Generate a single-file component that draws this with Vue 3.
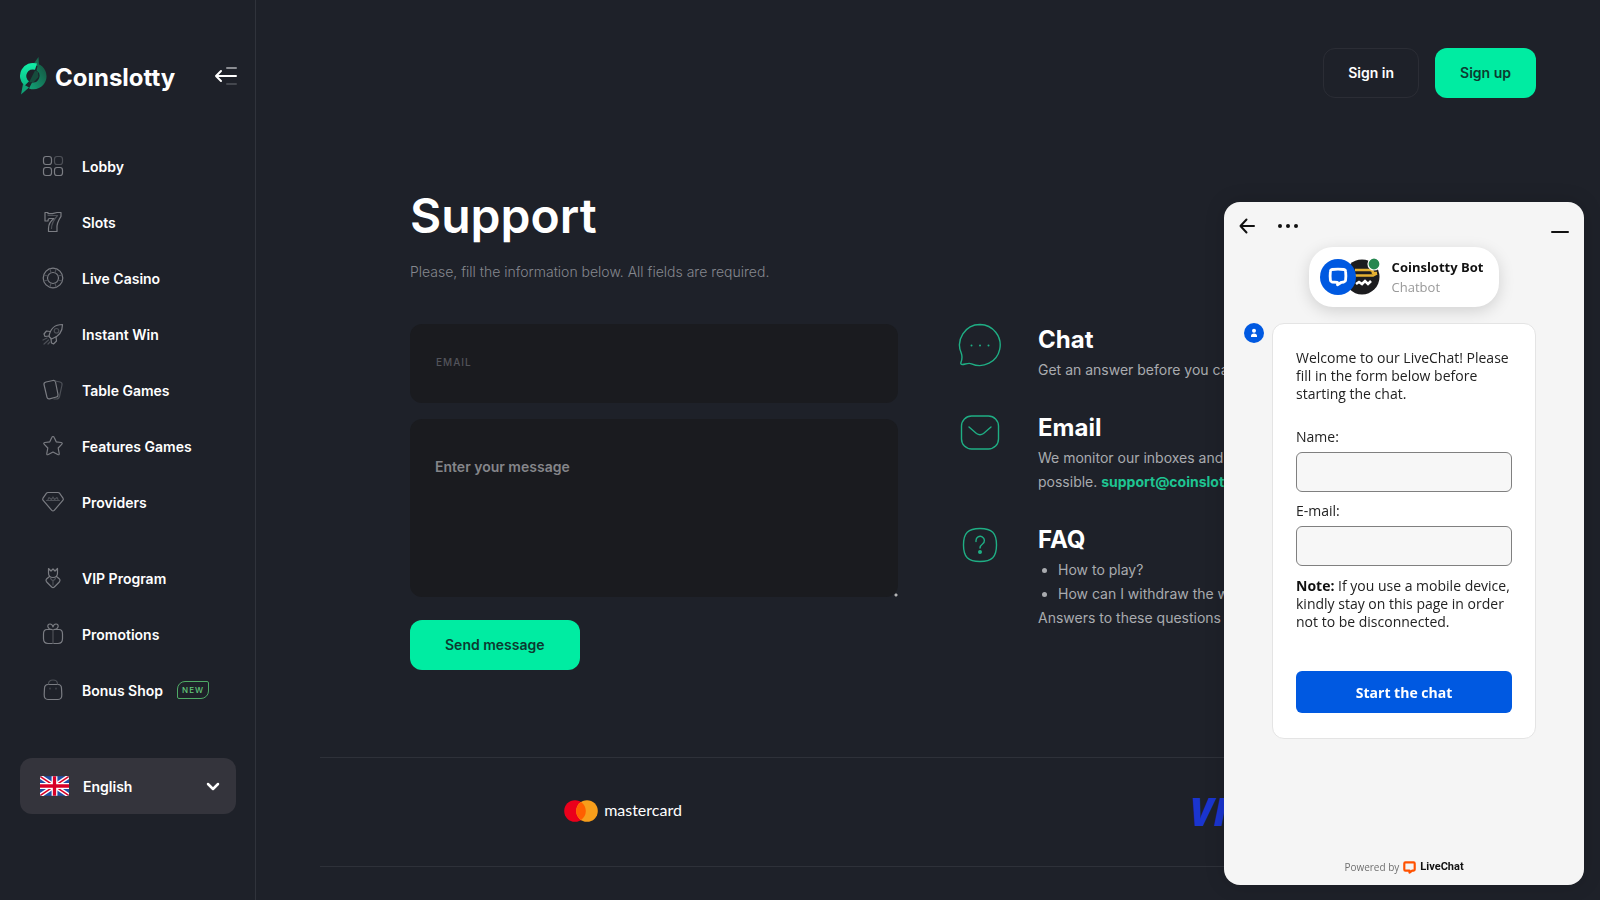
<template>
  <div class="layout">
    <aside class="sidebar">
      <div class="brand">
        <a href="#" class="logo">
          <svg class="logo-mark" viewBox="0 0 28 40" aria-hidden="true">
            <defs>
              <linearGradient id="markLight" x1="0" y1="0" x2="0" y2="1">
                <stop offset="0" stop-color="#12f0a8" />
                <stop offset="1" stop-color="#0bb985" />
              </linearGradient>
              <linearGradient id="markDark" x1="0" y1="1" x2="1" y2="0">
                <stop offset="0" stop-color="#12a377" />
                <stop offset="1" stop-color="#15523f" />
              </linearGradient>
            </defs>
            <path d="M18.500 1 19 10 12 10Z" fill="#17694f" />
            <path d="M1 38.500 3 28 9 31.500Z" fill="#11a176" />
            <path d="M18 8A13 13 0 0 1 9 32.400L12 26.400A6.500 6.500 0 0 0 16.500 14.500Z" fill="url(#markDark)" />
            <path d="M17 7.600A13 13 0 0 0 4.500 29.800L9 25.200A6.500 6.500 0 0 1 15 13.800Z" fill="url(#markLight)" />
            <path d="M15 14.500 9 26.500 14 26 18.500 21 18 16Z" fill="#164c3d" />
          </svg>
          <span class="logo-text">Coınslotty</span>
        </a>
        <button type="button" class="collapse" aria-label="Collapse menu">
          <svg viewBox="0 0 24 20" fill="none" stroke-linecap="round" stroke-width="2">
            <path d="M13 2h9" stroke="#8b8d92" />
            <path d="M13 18h9" stroke="#44474e" />
            <path d="M2 10h20M7 5l-5 5 5 5" stroke="#fff" stroke-linejoin="round" />
          </svg>
        </button>
      </div>

      <nav class="nav">
        <ul v-for="(group, index) in menu" :key="index" class="nav-group">
          <li v-for="item in group" :key="item.label">
            <a href="#" class="nav-link">
              <svg class="nav-icon" viewBox="0 0 22 22" aria-hidden="true">
                <path v-for="(d, i) in item.paths" :key="i" :d="d" />
                <path v-for="(d, i) in item.faint" :key="'f' + i" :d="d" class="faint" />
              </svg>
              <span>{{ item.label }}</span>
              <span v-if="item.badge" class="badge">{{ item.badge }}</span>
            </a>
          </li>
        </ul>
      </nav>

      <label class="language">
        <svg class="flag" viewBox="0 0 30 20" aria-hidden="true">
          <path fill="#1f4ea3" d="M0 0h30v20H0z" />
          <path d="M0 0l30 20M30 0L0 20" stroke="#fff" stroke-width="4.500" />
          <path d="M0 0l30 20M30 0L0 20" stroke="#d80027" stroke-width="1.600" />
          <path d="M15 0v20M0 10h30" stroke="#fff" stroke-width="6" />
          <path d="M15 0v20M0 10h30" stroke="#d80027" stroke-width="3.400" />
        </svg>
        <select v-model="language" aria-label="Language">
          <option>English</option>
          <option>Deutsch</option>
        </select>
        <svg class="chevron" viewBox="0 0 14 10" aria-hidden="true">
          <path d="M2 3l5 5 5-5" />
        </svg>
      </label>
    </aside>

    <main class="content">
      <header class="topbar">
        <button type="button" class="btn btn-outline">Sign in</button>
        <button type="button" class="btn btn-primary">Sign up</button>
      </header>

      <section class="support">
        <h1>Support</h1>
        <p class="lead">Please, fill the information below. All fields are required.</p>

        <div class="columns">
          <form class="support-form" @submit.prevent>
            <div class="field">
              <label for="email">Email</label>
              <input id="email" v-model="email" type="email" />
            </div>
            <textarea v-model="message" aria-label="Message" placeholder="Enter your message"></textarea>
            <button type="submit" class="btn btn-primary btn-send">Send message</button>
          </form>

          <div class="contacts">
            <article class="contact">
              <svg class="contact-icon" viewBox="0 0 44 44" aria-hidden="true">
                <path d="M22 1.500a20.500 20.500 0 1 1-8.500 39.300c-3-1.300-6.500.6-9 .7-1.600.1-2-.8-1.500-2.200.9-2.500 1.300-6.300.3-9A20.500 20.500 0 0 1 22 1.500Z" />
                <path d="M13.500 22.500v.1M22 22.500v.1M30.500 22.500v.1" class="dots" />
              </svg>
              <div>
                <h2>Chat</h2>
                <p>Get an answer before you can say “Jackpot”</p>
              </div>
            </article>
            <article class="contact">
              <svg class="contact-icon" viewBox="0 0 44 44" aria-hidden="true">
                <rect x="3.500" y="5" width="37" height="33" rx="10" />
                <path d="M11 16l7.500 6.500q3.500 2.500 7 0L33 16" />
              </svg>
              <div>
                <h2>Email</h2>
                <p>
                  We monitor our inboxes and try to answer you as soon as possible.
                  <a href="#">support@coinslotty.com</a>
                </p>
              </div>
            </article>
            <article class="contact">
              <svg class="contact-icon" viewBox="0 0 44 44" aria-hidden="true">
                <path d="M22 5.500c12 0 16.500 4.500 16.500 16.500S34 38.500 22 38.500 5.500 34 5.500 22 10 5.500 22 5.500Z" />
                <path d="M18 18.500v-1a4.200 4.200 0 1 1 6.500 3.500c-1.700 1.200-2.500 2-2.500 4" />
                <circle cx="22" cy="29" r="1.300" class="solid" />
              </svg>
              <div>
                <h2>FAQ</h2>
                <ul>
                  <li>How to play?</li>
                  <li>How can I withdraw the winnings?</li>
                </ul>
                <p>Answers to these questions in FAQ</p>
              </div>
            </article>
          </div>
        </div>
      </section>

      <footer class="payments">
        <div class="mastercard">
          <svg viewBox="0 0 34 22" aria-hidden="true">
            <circle cx="11" cy="11" r="10.800" fill="#eb001b" />
            <circle cx="23" cy="11" r="10.800" fill="#f79e1b" />
            <path d="M17 2a10.800 10.800 0 0 1 0 18 10.800 10.800 0 0 1 0-18Z" fill="#ff5f00" />
          </svg>
          <span>mastercard</span>
        </div>
        <div class="visa">VISA</div>
      </footer>
    </main>

    <section class="chat" aria-label="LiveChat">
      <header class="chat-header">
        <button type="button" aria-label="Back">
          <svg width="16" height="16" viewBox="0 0 16 16"><path d="M15 8H1.500M7.500 1.500L1.500 8l6 6.500" /></svg>
        </button>
        <button type="button" aria-label="Menu">
          <svg width="22" height="16" viewBox="0 0 22 16">
            <g fill="#111" stroke="none"><circle cx="3" cy="8" r="2" /><circle cx="11" cy="8" r="2" /><circle cx="19" cy="8" r="2" /></g>
          </svg>
        </button>
        <button type="button" class="minimize" aria-label="Minimize">
          <svg width="18" height="16" viewBox="0 0 18 16"><path d="M1 14h16" /></svg>
        </button>
      </header>

      <div class="agent">
        <svg class="agent-avatars" viewBox="0 0 60 38" aria-hidden="true">
          <circle cx="42" cy="19" r="17.500" fill="#1c1c1f" />
          <path d="M35 12h15q3 0 3 3h4" stroke="#e5b133" stroke-width="2.500" fill="none" />
          <path d="M35 17.500h18l4-2" stroke="#e5b133" stroke-width="2.500" fill="none" />
          <path d="M36 26l3-2 3 2 3-3 3 3 3-3" stroke="#fff" stroke-width="2.600" fill="none" />
          <circle cx="18" cy="19" r="18" fill="#0059e1" />
          <path d="M12 11.500q6-.8 12 0 1.500.2 1.600 1.700.5 4.500 0 9-.1 1.500-1.600 1.800l-2.500.3-4 2.500v-2.400l-5.500-.4q-1.500-.2-1.600-1.800-.5-4.500 0-9 .1-1.500 1.600-1.700Z" stroke="#fff" stroke-width="2.800" fill="none" stroke-linejoin="round" />
          <circle cx="54" cy="6" r="6" fill="#268750" stroke="#fff" stroke-width="1.200" />
        </svg>
        <div>
          <strong>Coinslotty Bot</strong>
          <span>Chatbot</span>
        </div>
      </div>

      <div class="chat-message">
        <svg class="user-avatar" viewBox="0 0 20 20" aria-hidden="true">
          <circle cx="10" cy="10" r="10" fill="#0059e1" />
          <circle cx="10" cy="7.800" r="2" fill="#fff" />
          <path d="M7 14v-1a3 2.500 0 0 1 6 0v1Z" fill="#fff" />
        </svg>
        <form class="chat-form" @submit.prevent>
          <p>Welcome to our LiveChat! Please fill in the form below before starting the chat.</p>
          <div class="chat-field">
            <label for="chat-name">Name:</label>
            <input id="chat-name" v-model="chatName" type="text" />
          </div>
          <div class="chat-field">
            <label for="chat-email">E-mail:</label>
            <input id="chat-email" v-model="chatEmail" type="email" />
          </div>
          <p class="note"><b>Note:</b> If you use a mobile device, kindly stay on this page in order not to be disconnected.</p>
          <button type="submit">Start the chat</button>
        </form>
      </div>

      <div class="powered">
        <span>Powered by</span>
        <svg viewBox="0 0 12 12" aria-hidden="true">
          <path d="M2.200 1.200h7.600q1 0 1 1v5.600q0 1-1 1.100H8.500L6 10.800V8.900H2.200q-1 0-1-1V2.200q0-1 1-1Z" />
        </svg>
        <b>LiveChat</b>
      </div>
    </section>
  </div>
</template>

<script setup>
import { ref } from 'vue';

const language = ref('English');
const email = ref('');
const message = ref('');
const chatName = ref('');
const chatEmail = ref('');

const menu = [
  [
    {
      label: 'Lobby',
      paths: [
        'M4 1.500h3q2.500 0 2.500 2.500v3q0 2.500-2.500 2.500H4Q1.500 9.500 1.500 7V4Q1.500 1.500 4 1.500Z',
        'M4 12.500h3q2.500 0 2.500 2.500v3q0 2.500-2.500 2.500H4Q1.500 20.500 1.500 18v-3q0-2.500 2.500-2.500Z',
        'M15 12.500h3q2.500 0 2.500 2.500v3q0 2.500-2.500 2.500h-3q-2.500 0-2.500-2.500v-3q0-2.500 2.500-2.500Z',
      ],
      faint: ['M15 1.500h3q2.500 0 2.500 2.500v3q0 2.500-2.500 2.500h-3q-2.500 0-2.500-2.500V4q0-2.500 2.500-2.500Z'],
    },
    {
      label: 'Slots',
      paths: ['M3 1.500h3v1.200h4.500L15 1.500h4v3.800C16.500 9 14.500 13 15 17.500v3H6.500v-3c0-4 2-7.500 5.500-10H7.500Q6 7.500 6 10H3Z'],
      faint: ['M6 4.500h9.500C11.500 9 9.500 13 9.500 17.500'],
    },
    {
      label: 'Live Casino',
      paths: [
        'M11 1.200a9.800 9.800 0 1 1 0 19.600 9.800 9.800 0 0 1 0-19.600Z',
        'M11 5.500a5.500 5.500 0 1 1 0 11 5.500 5.500 0 0 1 0-11Z',
      ],
      faint: ['M8 2l1 4M14 2l-1 4M2 8l4 1M20 8l-4 1M2 14l4-1M20 14l-4-1M8 20l1-4M14 20l-1-4'],
    },
    {
      label: 'Instant Win',
      paths: [
        'M7 13.500C8 7 12 1.500 20.500 1.500 20.500 9 16 14 9.500 16Z',
        'M8 8.500L4.500 8 2 11l1 2.500L7 13',
        'M14 14l.5 4-3 3-2-1-.5-4',
      ],
      faint: ['M14.500 5.500a2.300 2.300 0 1 1 0 4.600 2.300 2.300 0 0 1 0-4.600Z', 'M5 15l-4 2M6.500 17L2 21M8 19l-2 2'],
    },
    {
      label: 'Table Games',
      paths: ['M4 3l7-1.500q2-.3 2.500 1.500L16 15.500q.3 2-1.500 2.500l-7 1.800q-2 .3-2.500-1.500L2 5.500Q1.700 3.500 4 3Z'],
      faint: ['M13 2l5 1q2.500.5 2 3l-2.500 11.500q-.7 2.500-3 2.500H12'],
    },
    {
      label: 'Features Games',
      paths: ['M11 1.500q.8 0 1.200 1l2 4.300 5 .7q1.800.4.500 1.800L16.200 13l1 5.500q.2 1.800-1.500 1L11 17l-4.700 2.500q-1.700.8-1.500-1l1-5.500L2.300 9.300Q1 7.900 2.800 7.500l5-.7 2-4.300q.4-1 1.200-1Z'],
    },
    {
      label: 'Providers',
      paths: ['M6 1.500h10q1 0 1.500.7l3.500 5q.7 1.200-.2 2.200l-8.600 10q-1.200 1.200-2.400 0l-8.600-10Q.3 8.400 1 7.200l3.500-5Q5 1.500 6 1.500Z'],
      faint: ['M4.500 9.500h13', 'M6 8.500l1-2 2.500 2L11 6l1.500 2.500 2.500-2 1 2'],
    },
  ],
  [
    {
      label: 'VIP Program',
      paths: [
        'M6.500 1.500L9 4l2-2 2 2 2.500-2.500V6q0 4.500-4.500 4.500T6.500 6Z',
        'M7.500 9.500L4.500 12q-1 1.500.2 3l5 5q1.300 1.200 2.600 0l5-5q1.200-1.500.2-3l-3-2.500',
      ],
      faint: ['M8.500 11.500L11 14l2.500-2.500M11 14v4'],
    },
    {
      label: 'Promotions',
      paths: [
        'M5 6.500h12q3.500 0 3.500 4.500v4.500q0 5-4.500 5H6q-4.500 0-4.500-5V11q0-4.500 3.500-4.500Z',
        'M11 6.500C5 7 4.500 1 8 1q2.500 0 3 3 .5-3 3-3c3.500 0 3 6-3 5.500',
      ],
      faint: ['M11 6.500v14'],
    },
    {
      label: 'Bonus Shop',
      paths: ['M6 5.500h10q3.500 0 3.500 4l.3 6q.2 5-3.800 5H6q-4 0-3.800-5l.3-6q0-4 3.500-4Z'],
      faint: ['M6.500 5q0-4 4.500-4t4.500 4', 'M8 9v1M14 9v1'],
      badge: 'NEW',
    },
  ],
];
</script>

<style>
body {
  background-color: #1e2129;
}
</style>

<style scoped>
* {
  box-sizing: border-box;
}

.layout {
  display: flex;
  min-height: 100vh;
  font-family: Inter, "Liberation Sans", sans-serif;
  color: #fff;
  background-color: #1e2129;
}

h1,
h2,
p,
ul {
  margin: 0;
  padding: 0;
}

a {
  color: inherit;
  text-decoration: none;
}

button,
input,
select,
textarea {
  font-family: inherit;
}

button {
  cursor: pointer;
}

/* sidebar */
.sidebar {
  flex: none;
  width: 256px;
  padding: 56px 19px 0 20px;
  border-right: 1px solid #30333b;
}

.brand {
  display: flex;
  align-items: center;
  justify-content: space-between;
  height: 40px;
  margin-right: -2px;
}

.logo {
  display: flex;
  align-items: center;
  gap: 7px;
}

.logo-mark {
  width: 28px;
  height: 40px;
}

.logo-text {
  padding-top: 4px;
  font-size: 24px;
  font-weight: 700;
  line-height: 40px;
}

.collapse {
  display: flex;
  padding: 0;
  border: none;
  background: none;
}

.collapse svg {
  width: 24px;
  height: 20px;
}

.nav {
  display: flex;
  flex-direction: column;
  gap: 20px;
  margin-top: 42px;
}

.nav-group {
  list-style: none;
}

.nav-link {
  display: flex;
  align-items: center;
  height: 56px;
  padding-left: 22px;
  font-size: 14px;
  font-weight: 600;
}

.nav-icon {
  width: 22px;
  height: 22px;
  margin-right: 18px;
  fill: none;
  stroke: #7b7d83;
  stroke-width: 1.2;
  stroke-linejoin: round;
  stroke-linecap: round;
}

.nav-icon .faint {
  stroke: #4d5057;
}

.badge {
  margin-left: 14px;
  width: 32px;
  border: 1px solid #4faa66;
  border-radius: 8px 2px 8px 2px;
  font-size: 8px;
  font-weight: 500;
  line-height: 16px;
  letter-spacing: 1px;
  text-align: center;
  color: #62c87b;
}

.language {
  display: flex;
  align-items: center;
  height: 56px;
  margin-top: 40px;
  padding: 0 16px 0 20px;
  border-radius: 12px;
  background-color: #34343c;
}

.flag {
  width: 29px;
  height: 20px;
  border-radius: 2px;
}

.language select {
  flex: 1;
  margin-left: 14px;
  padding: 0;
  border: none;
  appearance: none;
  background: none;
  color: #fff;
  font-size: 14px;
  font-weight: 600;
}

.chevron {
  width: 14px;
  height: 10px;
  fill: none;
  stroke: #fff;
  stroke-width: 2.5;
  stroke-linecap: round;
  stroke-linejoin: round;
}

/* main */
.content {
  flex: 1;
  padding: 48px 64px 33px;
}

.topbar {
  display: flex;
  justify-content: flex-end;
  gap: 16px;
}

.btn {
  height: 50px;
  padding: 0 24px 2px;
  border: none;
  border-radius: 12px;
  font-size: 14px;
  font-weight: 600;
}

.btn-outline {
  border: 1px solid #2b2d35;
  background: none;
  color: #fff;
}

.btn-primary {
  padding: 0 25px 2px;
  background-color: #00eca2;
  color: #0c3a30;
}

.support {
  max-width: 1036px;
  margin: 88px auto 0;
}

.support h1 {
  font-size: 48px;
  font-weight: 600;
  line-height: 60px;
}

.lead {
  margin-top: 14px;
  font-size: 14px;
  font-weight: 300;
  line-height: 24px;
  color: #85878e;
}

.columns {
  display: grid;
  grid-template-columns: 1fr 1fr;
  gap: 60px;
  margin-top: 40px;
}

.support-form {
  display: flex;
  flex-direction: column;
  align-items: flex-start;
}

.field {
  position: relative;
  width: 100%;
}

.field label {
  position: absolute;
  top: 30px;
  left: 26px;
  font-size: 10px;
  font-weight: 500;
  line-height: 16px;
  letter-spacing: 1px;
  text-transform: uppercase;
  color: #53545b;
}

.field input,
.support-form textarea {
  display: block;
  width: 100%;
  border: none;
  border-radius: 12px;
  background-color: #1a1b1f;
  color: #fff;
  font-size: 14px;
  font-weight: 600;
}

.field input {
  height: 79px;
  padding: 40px 24px 16px;
}

.support-form textarea {
  height: 178px;
  margin-top: 16px;
  padding: 38px 25px;
  line-height: 20px;
  resize: vertical;
}

.support-form textarea::placeholder {
  color: #85868a;
}

.support-form textarea::-webkit-resizer {
  background: radial-gradient(circle at 13px 13px, #b5b5b5 1px, transparent 2px);
}

.btn-send {
  margin-top: 23px;
  padding: 0 35px 2px;
}

.contacts {
  display: flex;
  flex-direction: column;
  gap: 28px;
  margin-top: -2px;
}

.contact {
  display: flex;
  gap: 36px;
}

.contact-icon {
  flex: none;
  width: 44px;
  height: 44px;
  margin-top: 1px;
  fill: none;
  stroke: #1fae84;
  stroke-width: 1.4;
  stroke-linecap: round;
}

.contact-icon .dots {
  stroke-width: 2;
}

.contact-icon .solid {
  fill: #1fae84;
}

.contact h2 {
  font-size: 24px;
  font-weight: 700;
  line-height: 36px;
}

.contact p,
.contact li {
  font-size: 14px;
  line-height: 24px;
  color: #a9abaf;
}

.contact ul {
  padding-left: 20px;
}

.contact a {
  font-weight: 700;
  color: #1ec592;
}

.payments {
  display: grid;
  grid-template-columns: 1fr 1fr;
  place-items: center;
  height: 110px;
  margin-top: 87px;
  padding-bottom: 2px;
  border-top: 1px solid #2e3139;
  border-bottom: 1px solid #2e3139;
}

.mastercard {
  display: flex;
  align-items: center;
  gap: 6px;
  padding-right: 2px;
  font-family: Lato, sans-serif;
  font-size: 16px;
}

.mastercard svg {
  width: 34px;
  height: 22px;
}

.mastercard span {
  padding-bottom: 4px;
}

.visa {
  font-family: "Open Sans", sans-serif;
  font-size: 38px;
  font-weight: 800;
  font-style: italic;
  line-height: 40px;
  color: #1a35cf;
}

/* chat widget floats over the page */
.chat {
  position: fixed;
  right: 16px;
  bottom: 15px;
  display: flex;
  flex-direction: column;
  width: 360px;
  height: 683px;
  max-height: calc(100vh - 30px);
  border-radius: 16px;
  background-color: #f5f5f5;
  color: #222;
  font-family: "Open Sans", "Noto Sans", sans-serif;
  font-size: 14px;
  line-height: 18px;
  box-shadow: 0 0 20px rgba(0, 0, 0, 0.15);
}

.chat-header {
  display: flex;
  gap: 22px;
  padding: 16px 15px 0;
}

.chat-header button {
  display: flex;
  padding: 0;
  border: none;
  background: none;
}

.chat-header svg {
  fill: none;
  stroke: #111;
  stroke-width: 2;
  stroke-linecap: round;
  stroke-linejoin: round;
}

.minimize {
  margin-left: auto;
}

.agent {
  display: flex;
  align-items: center;
  align-self: center;
  gap: 12px;
  height: 60px;
  margin-top: 13px;
  padding: 0 16px 0 11px;
  border-radius: 24px;
  background-color: #fff;
  box-shadow: 0 4px 16px rgba(0, 0, 0, 0.15);
}

.agent-avatars {
  width: 60px;
  height: 38px;
}

.agent strong,
.agent span {
  display: block;
  font-size: 13px;
  line-height: 20px;
}

.agent strong {
  color: #111;
}

.agent span {
  color: #999;
}

.chat-message {
  display: flex;
  gap: 8px;
  margin-top: 16px;
  padding: 0 48px 0 20px;
}

.user-avatar {
  flex: none;
  width: 20px;
  height: 20px;
}

.chat-form {
  flex: 1;
  padding: 25px 23px;
  border: 1px solid #e4e4e4;
  border-radius: 12px;
  background-color: #fff;
}

.chat-form p + .chat-field {
  margin-top: 25px;
}

.chat-field {
  margin-top: 10px;
}

.chat-field label {
  display: block;
}

.chat-field input {
  display: block;
  width: 100%;
  height: 40px;
  margin-top: 6px;
  padding: 0 12px;
  border: 1px solid #808080;
  border-radius: 6px;
  background-color: #f7f7f7;
  font-size: 14px;
}

.note {
  margin-top: 11px;
}

.note b {
  color: #111;
}

.chat-form button {
  width: 100%;
  height: 42px;
  margin-top: 40px;
  border: none;
  border-radius: 6px;
  background-color: #0059e1;
  color: #fff;
  font-size: 14px;
  font-weight: 700;
}

.powered {
  display: flex;
  align-items: center;
  justify-content: center;
  gap: 4px;
  margin-top: auto;
  padding-bottom: 9px;
  font-size: 10px;
  color: #707070;
}

.powered svg {
  width: 13px;
  height: 13px;
  fill: none;
  stroke: #ff5100;
  stroke-width: 2;
  stroke-linejoin: round;
}

.powered b {
  font-family: Roboto, sans-serif;
  font-size: 11px;
  font-weight: 700;
  color: #111;
}
</style>
